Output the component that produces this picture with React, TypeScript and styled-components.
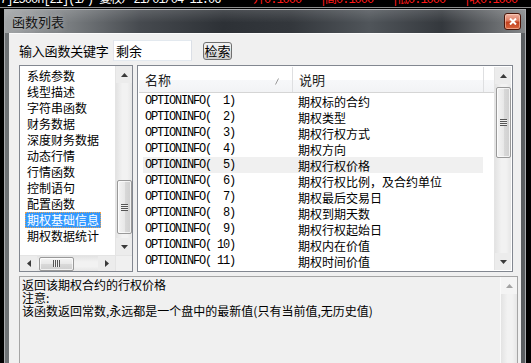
import React from "react";
import styled, { createGlobalStyle } from "styled-components";

const GlobalStyle = createGlobalStyle`
  html, body {
    margin: 0;
    padding: 0;
    background: #000;
  }
  body {
    width: 531px;
    height: 363px;
    overflow: hidden;
    font-family: "Noto Sans CJK SC", "DejaVu Sans", sans-serif;
  }
`;

const categories = [
    "系统参数",
    "线型描述",
    "字符串函数",
    "财务数据",
    "深度财务数据",
    "动态行情",
    "行情函数",
    "控制语句",
    "配置函数",
    "期权基础信息",
    "期权数据统计",
];

const functions = [
    "期权标的合约",
    "期权类型",
    "期权行权方式",
    "期权方向",
    "期权行权价格",
    "期权行权比例，及合约单位",
    "期权最后交易日",
    "期权到期天数",
    "期权行权起始日",
    "期权内在价值",
    "期权时间价值",
];

const quotes = ["开", "高", "低", "收"];

function pad(n: number) {
    return String(n).padStart(3, " ");
}

function Arrow({dir, disabled}: {dir: "up" | "down" | "left" | "right"; disabled?: boolean}) {
    const fill = disabled ? "#a3a3a3" : "#3a3a3a";
    const pts = {
        up: "0,4 3.5,0 7,4",
        down: "0,0 7,0 3.5,4",
        left: "4,0 4,7 0,3.5",
        right: "0,0 0,7 4,3.5",
    }[dir];
    const vertical = dir === "up" || dir === "down";
    return (
        <svg width={vertical ? 7 : 4} height={vertical ? 4 : 7} viewBox={vertical ? "0 0 7 4" : "0 0 4 7"}>
            <polygon points={pts} fill={fill}/>
        </svg>
    );
}

function VScroll({thumbTop, thumbHeight, disabled}: {thumbTop?: number; thumbHeight?: number; disabled?: boolean}) {
    return (
        <VBar $disabled={disabled}>
            <ArrowBox $size={17}><Arrow dir="up" disabled={disabled}/></ArrowBox>
            <VTrack>
                {thumbHeight ? (
                    <VThumb style={{marginTop: thumbTop, height: thumbHeight}}>
                        <Grip $vertical/>
                    </VThumb>
                ) : null}
            </VTrack>
            {disabled ? null : <ArrowBox $size={17}><Arrow dir="down"/></ArrowBox>}
        </VBar>
    );
}

export default function App() {
    return (
        <Screen>
            <GlobalStyle/>
            <TickerStrip>
                <TickerLine>
                    <TickerText $color="#ffffff" $width={253}>7]2500h[21](1/) 复权/ 21/01/04 11:06</TickerText>
                    {quotes.map((q) => (
                        <TickerText key={q} $color="#ff1a1a" $width={72}>{q}0.1000&nbsp;&nbsp;&nbsp;|</TickerText>
                    ))}
                </TickerLine>
            </TickerStrip>
            <Rule/>
            <Window>
                <TitleBar>
                    <Title>函数列表</Title>
                    <CloseButton>
                        <svg width="8" height="7" viewBox="0 0 8 7">
                            <path d="M1 0.5L7 6.5M7 0.5L1 6.5" stroke="#fff" strokeWidth="2"/>
                        </svg>
                    </CloseButton>
                </TitleBar>
                <Client>
                    <SearchRow>
                        <SearchLabel>输入函数关键字</SearchLabel>
                        <SearchInput defaultValue="剩余"/>
                        <SearchButton>检索</SearchButton>
                    </SearchRow>
                    <Panels>
                        <CategoryPanel>
                            <CategoryBody>
                                <CategoryList>
                                    {categories.map((c, i) => (
                                        <CategoryItem key={c}>
                                            <CategoryLabel $selected={i === 9}>{c}</CategoryLabel>
                                        </CategoryItem>
                                    ))}
                                </CategoryList>
                                <VScroll thumbTop={97} thumbHeight={54}/>
                            </CategoryBody>
                            <HBarRow>
                                <HBar>
                                    <ArrowBox $size={17}><Arrow dir="left"/></ArrowBox>
                                    <HTrack>
                                        <HThumb style={{marginLeft: 2, width: 35}}>
                                            <Grip/>
                                        </HThumb>
                                    </HTrack>
                                    <ArrowBox $size={17}><Arrow dir="right"/></ArrowBox>
                                </HBar>
                                <Corner/>
                            </HBarRow>
                        </CategoryPanel>
                        <FunctionPanel>
                            <FunctionBody>
                                <HeaderRow>
                                    <HeaderCell $width={154}>
                                        名称
                                        <SortMark>
                                            <svg width="4" height="7" viewBox="0 0 4 7">
                                                <path d="M3.5 0.5L0.5 6.5" stroke="#9a9a9a" strokeWidth="1"/>
                                            </svg>
                                        </SortMark>
                                    </HeaderCell>
                                    <HeaderCell $width={191}>说明</HeaderCell>
                                    <HeaderFill/>
                                </HeaderRow>
                                <Rows>
                                    {functions.map((f, i) => (
                                        <Row key={i} $hot={i === 4}>
                                            <NameCell>OPTIONINFO({pad(i + 1)})</NameCell>
                                            <DescCell>{f}</DescCell>
                                        </Row>
                                    ))}
                                </Rows>
                            </FunctionBody>
                            <VScroll thumbTop={3} thumbHeight={71}/>
                        </FunctionPanel>
                    </Panels>
                    <HelpPanel>
                        <HelpText>
                            <div>返回该期权合约的行权价格</div>
                            <div>注意:</div>
                            <div>该函数返回常数,永远都是一个盘中的最新值(只有当前值,无历史值)</div>
                        </HelpText>
                        <VScroll disabled/>
                    </HelpPanel>
                </Client>
            </Window>
        </Screen>
    );
}

const Screen = styled.div`
    width: 531px;
    height: 363px;
    background: #000;
    overflow: hidden;
    display: flex;
    flex-direction: column;
`;

const TickerStrip = styled.div`
    flex: none;
    height: 7px;
    overflow: hidden;
`;

const TickerLine = styled.div`
    display: flex;
    margin-top: -7px;
    height: 14px;
    line-height: 14px;
    white-space: nowrap;
    font-size: 12px;
    font-family: "Liberation Mono", "Noto Sans CJK SC", monospace;
`;

const TickerText = styled.span<{$color: string; $width: number}>`
    flex: none;
    width: ${p => p.$width}px;
    color: ${p => p.$color};
    letter-spacing: -1px;
`;

const Rule = styled.div`
    flex: none;
    height: 1px;
    margin-bottom: 1px;
    background: #8c8c8c;
`;

const Window = styled.div`
    flex: 1;
    width: 522px;
    margin-left: 4px;
    box-sizing: border-box;
    border: 1px solid #a9acaf;
    border-bottom: none;
    background: linear-gradient(to right, #6f7376, #43474b 20%, #383c40 60%, #5b5f62);
    display: flex;
    flex-direction: column;
    min-height: 0;
`;

const TitleBar = styled.div`
    flex: none;
    height: 23px;
    display: flex;
    align-items: center;
    padding: 0 4px 0 7px;
    background:
        linear-gradient(to bottom, rgba(255, 255, 255, 0.14), rgba(255, 255, 255, 0) 55%),
        linear-gradient(to right, #a2a5a7 0%, #7a7e81 12%, #464a4f 26%, #2d3136 42%, #33373c 55%, #50555a 70%, #34383d 84%, #6a6d70 95%, #85888a 100%);
`;

const Title = styled.div`
    flex: 1;
    font-size: 13px;
    color: #151515;
    text-shadow: 0 0 5px rgba(230, 230, 230, 0.55);
`;

const CloseButton = styled.div`
    width: 17px;
    height: 17px;
    box-sizing: border-box;
    border: 1px solid #4a1509;
    border-radius: 3px;
    display: flex;
    align-items: center;
    justify-content: center;
    background: linear-gradient(to bottom, #efb3a2 0%, #de7a5f 45%, #c23f1c 55%, #d9663f 100%);
    box-shadow: inset 0 0 0 1px rgba(255, 220, 200, 0.5);
`;

const Client = styled.div`
    flex: 1;
    margin: 0 4px;
    min-height: 0;
    background: #f0f0f0;
    border-top: 1px solid #fbfbfb;
    padding: 3px 2px 0 10px;
    display: flex;
    flex-direction: column;
    overflow: hidden;
`;

const SearchRow = styled.div`
    display: flex;
    align-items: center;
    height: 21px;
    margin-top: 3px;
`;

const SearchLabel = styled.div`
    width: 94px;
    font-size: 13px;
    color: #000;
    letter-spacing: -0.2px;
`;

const SearchInput = styled.input`
    width: 79px;
    height: 21px;
    box-sizing: border-box;
    border: 1px solid #abadb3;
    border-top-color: #e3e9ef;
    border-left-color: #e2e3ea;
    border-right-color: #dbdfe6;
    border-bottom-color: #e3e9ef;
    padding: 0 2px;
    font-size: 13px;
    font-family: "Noto Sans CJK SC", sans-serif;
    background: #fff;
    outline: none;
`;

const SearchButton = styled.div`
    margin-left: 11px;
    width: 29px;
    height: 18px;
    box-sizing: border-box;
    border: 1px solid #707070;
    border-radius: 3px;
    display: flex;
    align-items: center;
    justify-content: center;
    font-size: 13px;
    color: #000;
    background: linear-gradient(to bottom, #f2f2f2 0%, #ebebeb 48%, #dddddd 52%, #cfcfcf 100%);
`;

const Panels = styled.div`
    flex: none;
    display: flex;
    gap: 4px;
    height: 207px;
    margin-top: 4px;
`;

const CategoryPanel = styled.div`
    width: 114px;
    box-sizing: border-box;
    border: 1px solid #828790;
    background: #fff;
    display: flex;
    flex-direction: column;
`;

const CategoryBody = styled.div`
    flex: 1;
    display: flex;
    min-height: 0;
`;

const CategoryList = styled.div`
    flex: 1;
    padding: 2px 0 0 5px;
    overflow: hidden;
`;

const CategoryItem = styled.div`
    height: 16px;
    line-height: 16px;
    font-size: 12px;
    white-space: nowrap;
`;

const CategoryLabel = styled.span<{$selected?: boolean}>`
    display: inline-block;
    height: 16px;
    padding: 0 2px;
    box-sizing: border-box;
    color: ${p => (p.$selected ? "#fff" : "#000")};
    background: ${p => (p.$selected ? "#3399ff" : "transparent")};
    outline: ${p => (p.$selected ? "1px dotted #e8a050" : "none")};
    outline-offset: -1px;
`;

const VBar = styled.div<{$disabled?: boolean}>`
    width: 16px;
    flex: none;
    display: flex;
    flex-direction: column;
    background: ${p => (p.$disabled ? "#f4f4f4" : "#ececec")};
    border-left: 1px solid ${p => (p.$disabled ? "#fafafa" : "#e4e4e4")};
`;

const ArrowBox = styled.div<{$size: number}>`
    flex: none;
    width: ${p => p.$size}px;
    height: ${p => p.$size}px;
    max-width: 100%;
    max-height: 100%;
    display: flex;
    align-items: center;
    justify-content: center;
`;

const VTrack = styled.div`
    flex: 1;
    display: flex;
    flex-direction: column;
    align-items: center;
    background: linear-gradient(to right, #e3e3e3, #f2f2f2 40%, #f2f2f2 70%, #e6e6e6);
`;

const VThumb = styled.div`
    width: 15px;
    box-sizing: border-box;
    border: 1px solid #999;
    border-radius: 2px;
    background: linear-gradient(to right, #f4f4f4, #e8e8e8 50%, #d9d9d9 51%, #cfcfcf);
    box-shadow: inset 0 0 0 1px rgba(255, 255, 255, 0.7);
    display: flex;
    align-items: center;
    justify-content: center;
`;

const Grip = styled.div<{$vertical?: boolean}>`
    width: 7px;
    height: 7px;
    background: ${p =>
        p.$vertical
            ? "repeating-linear-gradient(to bottom, #555 0px, #555 1px, #eee 1px, #eee 2px)"
            : "repeating-linear-gradient(to right, #555 0px, #555 1px, #eee 1px, #eee 2px)"};
`;

const HBarRow = styled.div`
    flex: none;
    height: 16px;
    display: flex;
`;

const HBar = styled.div`
    flex: 1;
    display: flex;
    background: #ececec;
    border-top: 1px solid #e4e4e4;
`;

const HTrack = styled.div`
    flex: 1;
    display: flex;
    align-items: center;
    background: linear-gradient(to bottom, #e3e3e3, #f2f2f2 40%, #f2f2f2 70%, #e6e6e6);
`;

const HThumb = styled.div`
    height: 14px;
    box-sizing: border-box;
    border: 1px solid #999;
    border-radius: 2px;
    background: linear-gradient(to bottom, #f4f4f4, #e8e8e8 50%, #d9d9d9 51%, #cfcfcf);
    box-shadow: inset 0 0 0 1px rgba(255, 255, 255, 0.7);
    display: flex;
    align-items: center;
    justify-content: center;
`;

const Corner = styled.div`
    width: 16px;
    background: #f0f0f0;
    border-top: 1px solid #e4e4e4;
    border-left: 1px solid #e4e4e4;
`;

const FunctionPanel = styled.div`
    width: 376px;
    box-sizing: border-box;
    border: 1px solid #828790;
    padding: 1px;
    background: #fff;
    display: flex;
`;

const FunctionBody = styled.div`
    flex: 1;
    display: flex;
    flex-direction: column;
    min-width: 0;
`;

const HeaderRow = styled.div`
    flex: none;
    height: 25px;
    display: flex;
    border-bottom: 1px solid #d5d5d5;
    background: linear-gradient(to bottom, #ffffff, #ffffff 50%, #f7f8fa 51%, #f2f3f5);
`;

const HeaderCell = styled.div<{$width: number}>`
    width: ${p => p.$width}px;
    box-sizing: border-box;
    border-right: 1px solid #dedfe1;
    padding-left: 6px;
    display: flex;
    align-items: center;
    font-size: 13px;
    color: #1e1e1e;
    position: relative;
`;

const SortMark = styled.span`
    position: absolute;
    right: 13px;
    top: 11px;
    display: flex;
`;

const HeaderFill = styled.div`
    flex: 1;
`;

const Rows = styled.div`
    flex: 1;
    overflow: hidden;
    padding-left: 4px;
`;

const Row = styled.div<{$hot?: boolean}>`
    width: 340px;
    height: 16px;
    display: flex;
    align-items: center;
    background: ${p => (p.$hot ? "#f0f0f0" : "transparent")};
`;

const NameCell = styled.div`
    width: 155px;
    padding-left: 2px;
    box-sizing: border-box;
    white-space: pre;
    font-family: "Liberation Mono", monospace;
    font-size: 12px;
    letter-spacing: -1.2px;
    color: #000;
`;

const DescCell = styled.div`
    font-size: 12px;
    color: #000;
    white-space: nowrap;
`;

const HelpPanel = styled.div`
    flex: 1;
    margin-top: 4px;
    width: 499px;
    box-sizing: border-box;
    border: 1px solid #a5a5a5;
    border-bottom: none;
    background: #f0f0f0;
    display: flex;
    min-height: 0;
`;

const HelpText = styled.div`
    flex: 1;
    padding: 1px 0 0 2px;
    font-size: 12px;
    line-height: 13px;
    color: #000;
`;
